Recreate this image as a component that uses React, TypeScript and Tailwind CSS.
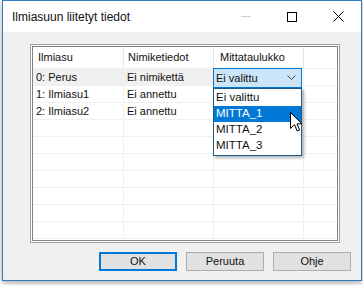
import React from "react";

const rows = [
  { name: "0: Perus", label: "Ei nimikettä", selected: true },
  { name: "1: Ilmiasu1", label: "Ei annettu" },
  { name: "2: Ilmiasu2", label: "Ei annettu" },
  { name: "", label: "" },
  { name: "", label: "" },
  { name: "", label: "" },
  { name: "", label: "" },
  { name: "", label: "" },
  { name: "", label: "" },
  { name: "", label: "" },
];

const options = ["Ei valittu", "MITTA_1", "MITTA_2", "MITTA_3"];

const Cursor = () => (
  <svg className="absolute left-[290px] top-[112px]" width="13" height="21" viewBox="0 0 13 21">
    <path d="M0.5 0.5 L0.5 16.5 L4.5 12.7 L7.2 19 L9.6 18 L7 11.8 L12 11.8 Z" fill="white" stroke="black" strokeWidth="1" strokeLinejoin="miter" />
  </svg>
);

const App = () => {
  return (
    <div
      className="w-[363px] h-[285px] bg-white relative overflow-hidden text-[11px] text-[#111]"
      style={{ fontFamily: '"Liberation Sans", Arial, sans-serif' }}
    >
      <div className="ml-[2px] w-[360px] h-[281px] border border-[#2f7ac0] flex flex-col shadow-[0_2px_6px_rgba(0,0,0,0.35)]">
        {/* title bar */}
        <div className="h-[31px] bg-white flex items-center shrink-0">
          <span className="ml-[9px] text-[12px] leading-none">Ilmiasuun liitetyt tiedot</span>
          <div className="ml-auto flex items-center h-full">
            <div className="w-[46px] h-full flex items-center justify-center">
              <div className="w-[10px] h-px bg-[#cfcfcf]" />
            </div>
            <div className="w-[46px] h-full flex items-center justify-center">
              <div className="w-[10px] h-[10px] border border-black" />
            </div>
            <div className="w-[46px] h-full flex items-center justify-center">
              <svg width="11" height="11" viewBox="0 0 11 11">
                <path d="M0.5 0.5 L10.5 10.5 M10.5 0.5 L0.5 10.5" stroke="black" strokeWidth="1" />
              </svg>
            </div>
          </div>
        </div>

        {/* body */}
        <div className="flex-1 bg-[#f0f0f0] flex flex-col pt-[12px]">
          <div className="ml-[27px] w-[310px] h-[199px] border border-[#a0a0a0] p-px bg-white">
            <div className="w-full h-full border border-[#828282] bg-white overflow-hidden">
              {/* header */}
              <div className="flex h-[22px] border-b border-[#f0f0f0]">
                <div className="w-[91px] border-r border-[#e5e5e5] pl-[5px] flex items-center">Ilmiasu</div>
                <div className="w-[90px] border-r border-[#e5e5e5] pl-[4px] flex items-center">Nimiketiedot</div>
                <div className="w-[90px] border-r border-[#e5e5e5] pl-[6px] flex items-center">Mittataulukko</div>
                <div className="flex-1" />
              </div>
              {rows.map((r, i) => (
                <div key={i} className="flex h-[17px] border-b border-[#f0f0f0]">
                  <div
                    className={
                      "w-[91px] border-r border-[#f0f0f0] pl-[3px] flex items-center whitespace-nowrap " +
                      (r.selected ? "bg-[#f0f0f0]" : "")
                    }
                  >
                    {r.name}
                  </div>
                  <div
                    className={
                      "w-[90px] border-r border-[#f0f0f0] pl-[3px] flex items-center whitespace-nowrap " +
                      (r.selected ? "bg-[#f0f0f0]" : "")
                    }
                  >
                    {r.label}
                  </div>
                  <div className="w-[90px] border-r border-[#f0f0f0]" />
                  <div className="flex-1" />
                </div>
              ))}
            </div>
          </div>

          {/* buttons */}
          <div className="mt-[9px] flex justify-end gap-[9px] pr-[10px]">
            <button className="w-[78px] h-[19px] border-2 border-[#0078d7] bg-[#e1e1e1] flex items-center justify-center leading-none">
              OK
            </button>
            <button className="w-[78px] h-[19px] border border-[#adadad] bg-[#e1e1e1] flex items-center justify-center leading-none">
              Peruuta
            </button>
            <button className="w-[78px] h-[19px] border border-[#adadad] bg-[#e1e1e1] flex items-center justify-center leading-none">
              Ohje
            </button>
          </div>
        </div>
      </div>

      {/* combobox editor over the grid cell */}
      <div className="absolute left-[213px] top-[68px] w-[89px] h-[20px] border border-[#0078d7] bg-[#cce4f7] flex items-center pl-[2px]">
        <span>Ei valittu</span>
        <svg className="ml-auto mr-[5px]" width="9" height="6" viewBox="0 0 9 6">
          <path d="M0.5 0.5 L4.5 4.5 L8.5 0.5" fill="none" stroke="#444" strokeWidth="1" />
        </svg>
      </div>

      {/* dropdown list */}
      <div className="absolute left-[213px] top-[88px] w-[89px] border border-[#1c5a8a] bg-white py-px shadow-[2px_2px_3px_rgba(0,0,0,0.3)]">
        {options.map((o, i) => (
          <div
            key={o}
            className={
              "h-[16px] pl-[2px] flex items-center text-[11.5px] " +
              (i === 1 ? "bg-[#0078d7] text-white" : "")
            }
          >
            {o}
          </div>
        ))}
      </div>

      <Cursor />
    </div>
  );
};

export default App;
